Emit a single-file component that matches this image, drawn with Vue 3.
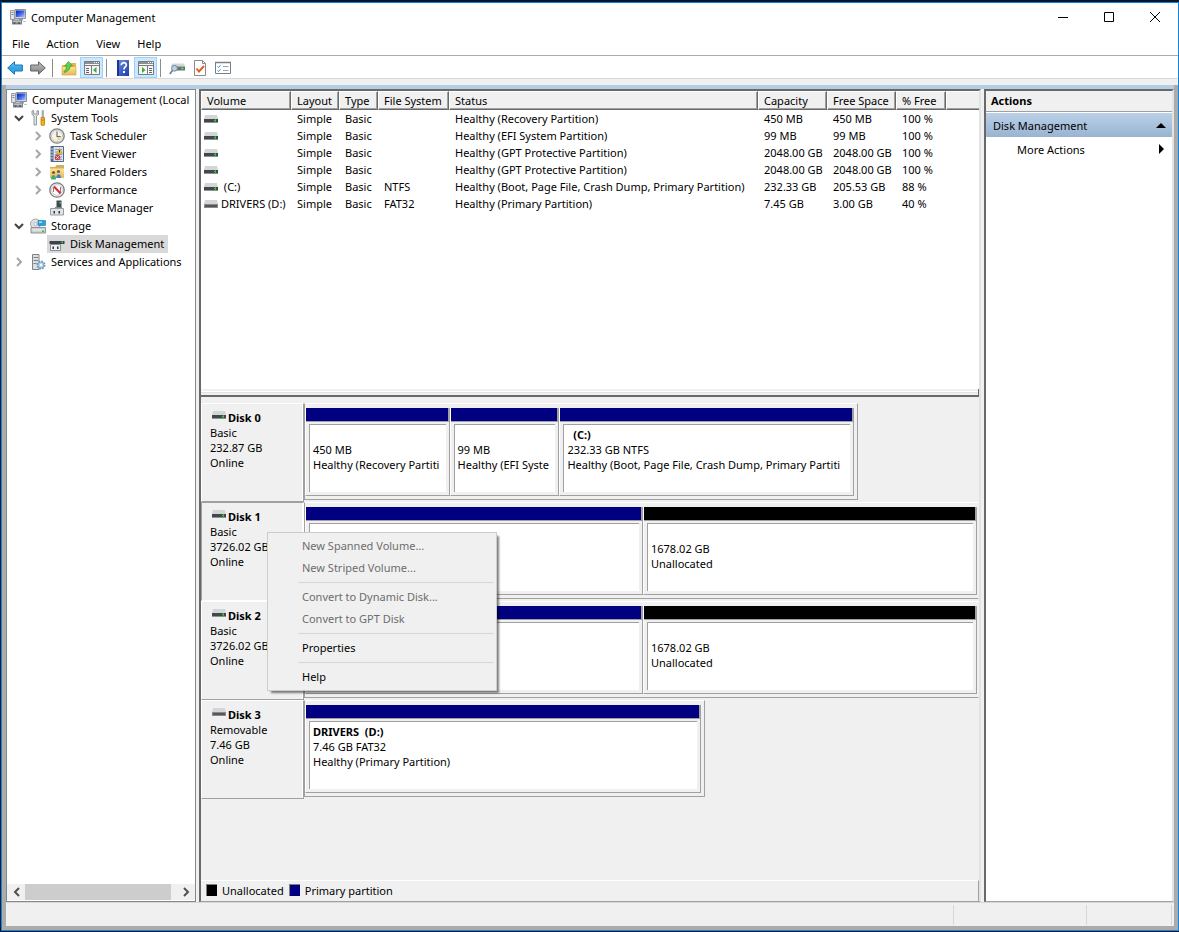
<script setup>
import { ref } from 'vue'

const menus = ['File', 'Action', 'View', 'Help']

const tools = [
  { icon: 'back', label: 'Back' },
  { icon: 'forward', label: 'Forward' },
  { sep: true },
  { icon: 'up-folder', label: 'Up one level' },
  { icon: 'pane-left', label: 'Show or hide console tree', on: true },
  { sep: true },
  { icon: 'help', label: 'Help' },
  { icon: 'pane-right', label: 'Show or hide action pane', on: true },
  { sep: true },
  { icon: 'drive-scan', label: 'Rescan disks' },
  { icon: 'page-check', label: 'Properties' },
  { icon: 'checklist', label: 'Settings' }
]

const tree = [
  { text: 'Computer Management (Local', icon: 'computer', level: 'root' },
  { text: 'System Tools', icon: 'tools', level: 'one', state: 'open' },
  { text: 'Task Scheduler', icon: 'clock', level: 'two', state: 'closed' },
  { text: 'Event Viewer', icon: 'event', level: 'two', state: 'closed' },
  { text: 'Shared Folders', icon: 'shared', level: 'two', state: 'closed' },
  { text: 'Performance', icon: 'perf', level: 'two', state: 'closed' },
  { text: 'Device Manager', icon: 'device', level: 'two' },
  { text: 'Storage', icon: 'storage', level: 'one', state: 'open' },
  { text: 'Disk Management', icon: 'disk-mgmt', level: 'two', selected: true },
  { text: 'Services and Applications', icon: 'services', level: 'one', state: 'closed' }
]

const columns = [
  { key: 'volume', label: 'Volume' },
  { key: 'layout', label: 'Layout' },
  { key: 'type', label: 'Type' },
  { key: 'fs', label: 'File System' },
  { key: 'status', label: 'Status' },
  { key: 'capacity', label: 'Capacity' },
  { key: 'free', label: 'Free Space' },
  { key: 'pct', label: '% Free' }
]

const volumes = [
  ['', 'Simple', 'Basic', '', 'Healthy (Recovery Partition)', '450 MB', '450 MB', '100 %'],
  ['', 'Simple', 'Basic', '', 'Healthy (EFI System Partition)', '99 MB', '99 MB', '100 %'],
  ['', 'Simple', 'Basic', '', 'Healthy (GPT Protective Partition)', '2048.00 GB', '2048.00 GB', '100 %'],
  ['', 'Simple', 'Basic', '', 'Healthy (GPT Protective Partition)', '2048.00 GB', '2048.00 GB', '100 %'],
  [' (C:)', 'Simple', 'Basic', 'NTFS', 'Healthy (Boot, Page File, Crash Dump, Primary Partition)', '232.33 GB', '205.53 GB', '88 %'],
  ['DRIVERS (D:)', 'Simple', 'Basic', 'FAT32', 'Healthy (Primary Partition)', '7.45 GB', '3.00 GB', '40 %']
]

const disks = [
  {
    name: 'Disk 0', kind: 'Basic', size: '232.87 GB', state: 'Online', icon: 'drive', span: 82,
    parts: [
      { grow: 144, kind: 'primary', title: '', size: '450 MB', status: 'Healthy (Recovery Partiti' },
      { grow: 109, kind: 'primary', title: '', size: '99 MB', status: 'Healthy (EFI Syste' },
      { grow: 295, kind: 'primary', title: '  (C:)', size: '232.33 GB NTFS', status: 'Healthy (Boot, Page File, Crash Dump, Primary Partiti' }
    ]
  },
  {
    name: 'Disk 1', kind: 'Basic', size: '3726.02 GB', state: 'Online', icon: 'drive', span: 100, active: true,
    parts: [
      { grow: 338, kind: 'primary', title: '', size: '', status: '' },
      { grow: 334, kind: 'free', title: '', size: '1678.02 GB', status: 'Unallocated' }
    ]
  },
  {
    name: 'Disk 2', kind: 'Basic', size: '3726.02 GB', state: 'Online', icon: 'drive', span: 100,
    parts: [
      { grow: 338, kind: 'primary', title: '', size: '', status: '' },
      { grow: 334, kind: 'free', title: '', size: '1678.02 GB', status: 'Unallocated' }
    ]
  },
  {
    name: 'Disk 3', kind: 'Removable', size: '7.46 GB', state: 'Online', icon: 'drive-off', span: 59.4,
    parts: [
      { grow: 396, kind: 'primary', title: 'DRIVERS  (D:)', size: '7.46 GB FAT32', status: 'Healthy (Primary Partition)' }
    ]
  }
]

const contextItems = [
  { text: 'New Spanned Volume...', disabled: true },
  { text: 'New Striped Volume...', disabled: true },
  { sep: true },
  { text: 'Convert to Dynamic Disk...', disabled: true },
  { text: 'Convert to GPT Disk', disabled: true },
  { sep: true },
  { text: 'Properties' },
  { sep: true },
  { text: 'Help' }
]

const menuOpen = ref(true)
</script>

<template>
  <div class="desktop">
    <svg class="defs" aria-hidden="true">
      <defs>
        <linearGradient id="gBlue" x1="0" y1="0" x2="0" y2="1"><stop offset="0" stop-color="#7fd0f7" /><stop offset=".5" stop-color="#2ea3e6" /><stop offset="1" stop-color="#3fb4ee" /></linearGradient>
        <linearGradient id="gGrey" x1="0" y1="0" x2="0" y2="1"><stop offset="0" stop-color="#c4c4c4" /><stop offset="1" stop-color="#7c7c7c" /></linearGradient>
        <linearGradient id="gFold" x1="0" y1="0" x2="0" y2="1"><stop offset="0" stop-color="#fbe59c" /><stop offset="1" stop-color="#e6b958" /></linearGradient>
        <linearGradient id="gScreen" x1="0" y1="0" x2="1" y2="1"><stop offset="0" stop-color="#0a1fb0" /><stop offset=".5" stop-color="#3a62e8" /><stop offset="1" stop-color="#a9c8ff" /></linearGradient>
        <linearGradient id="gHelp" x1="0" y1="0" x2="1" y2="1"><stop offset="0" stop-color="#6f8fe0" /><stop offset="1" stop-color="#1b3ba6" /></linearGradient>
      </defs>
      <symbol id="back" viewBox="0 0 16 16"><path d="M.7 8 7.5 1.800V5h7.800v6H7.500v3.200z" fill="url(#gBlue)" stroke="#1c6fae" /></symbol>
      <symbol id="forward" viewBox="0 0 16 16"><path d="M15.300 8 8.500 1.800V5H.7v6h7.800v3.200z" fill="url(#gGrey)" stroke="#626262" /></symbol>
      <symbol id="up-folder" viewBox="0 0 16 16"><path d="M1 5h8l1-2h5v11.500H1z" fill="#e2b64e" /><path d="M1 6.500h14V15H1z" fill="url(#gFold)" stroke="#d0a040" stroke-width=".6" /><path d="M3 11.500C4.500 10.500 5.500 9 5.500 6H3.500L7.500 1.500 11.500 6H9.300C9 9 7 11.500 3.500 12.500z" fill="#5fce48" stroke="#2c9420" stroke-width=".6" /></symbol>
      <symbol id="pane-left" viewBox="0 0 16 16"><path d="M.5 1.500h15v13H.5z" fill="#f6f6f6" stroke="#7b7b7b" /><path d="M1 2h14v2H1z" fill="#8a8f96" /><path d="M10 2.500h1M12 2.500h1M14 2.500h1" stroke="#fff" /><path d="M1 5.500h14M7.500 6v8.500" stroke="#7b7b7b" /><path d="M2 8.500h3M2 10.500h3M2 12.500h3" stroke="#5d6670" /><path d="M12.500 7v6L9 10z" fill="#35b135" /></symbol>
      <symbol id="pane-right" viewBox="0 0 16 16"><path d="M.5 1.500h15v13H.5z" fill="#f6f6f6" stroke="#7b7b7b" /><path d="M1 2h14v2H1z" fill="#8a8f96" /><path d="M10 2.500h1M12 2.500h1M14 2.500h1" stroke="#fff" /><path d="M1 5.500h14M9.500 6v8.500" stroke="#7b7b7b" /><path d="M11 8.500h3M11 10.500h3M11 12.500h3" stroke="#5d6670" /><path d="M4 7v6l3.500-3z" fill="#35b135" /></symbol>
      <symbol id="help" viewBox="0 0 16 16"><path d="M2 0h12v16H2z" fill="url(#gHelp)" /><path d="M2 0h2v16H2z" fill="#1c3590" /><path d="M6.300 5.200C6.300 1.800 11.500 2 11.300 5c-.1 1.800-2.300 2-2.300 4.500" fill="none" stroke="#fff" stroke-width="1.700" /><path d="M8 11h2v2H8z" fill="#fff" /></symbol>
      <symbol id="drive-scan" viewBox="0 0 16 16"><path d="M3 3.500h12l1 3H2z" fill="#d4d7da" /><path d="M3 6.500h13v4H3z" fill="#6a7075" /><path d="M12 7.500h2.500V9.500H12z" fill="#36e04a" /><circle cx="5.500" cy="8.300" r="2.900" fill="#b5d4ea" stroke="#6f8798" /><path d="M3.400 10.500.8 14" stroke="#6a7e8c" stroke-width="1.600" /></symbol>
      <symbol id="page-check" viewBox="0 0 16 16"><path d="M2.500.5h8l3 3v12h-11z" fill="#fff" stroke="#8a8a8a" /><path d="M10.500.5v3h3" fill="none" stroke="#8a8a8a" /><path d="m4.500 8.500 2.500 3 5-5.500" fill="none" stroke="#e5581e" stroke-width="1.900" /></symbol>
      <symbol id="checklist" viewBox="0 0 16 16"><path d="M.5 2.500h15v11H.5z" fill="#fff" stroke="#75808a" /><path d="M0 2.500h16" stroke="#75808a" stroke-width="1.500" /><path d="m2.500 6.500 1 1 2-2.200M2.500 10.500l1 1 2-2.200" fill="none" stroke="#2d8bd8" /><path d="M8 6.500h5.500M8 10.500h5.500" stroke="#9aa3ab" /></symbol>
      <symbol id="computer" viewBox="0 0 16 16"><path d="M5 .5h10.500v9H5z" fill="#cdd2d8" stroke="#8d949c" /><path d="M6 1.500h8.500V8H6z" fill="url(#gScreen)" /><path d="M.5 1.500h4v9h-4z" fill="#dfe2e6" stroke="#979da4" /><path d="M1.500 3.500h2M1.500 5.500h2" stroke="#808890" /><path d="M9 10h4v1.500H9z" fill="#9da3aa" /><path d="M2 10.500h10v5H2z" fill="#7d848c" /><path d="M3 11.500h8v2H3z" fill="#b9bec4" /><path d="M3.500 14h2M8 14h2" stroke="#333" /><path d="M13 12h3v1h-3z" fill="#c2c6ca" /></symbol>
      <symbol id="tools" viewBox="0 0 16 16"><path d="M3 1v3.500l2 1.500v9h2.500V6L9.500 4.500V1L8 .5V4H4.700V.5z" fill="#e2e5e8" stroke="#7c838a" stroke-width=".8" transform="translate(-1 0)" /><path d="M12 .5h1.500v7H12z" fill="#b6bcc2" stroke="#82898f" stroke-width=".5" /><path d="M11 7.500h3.500v7.500q-1.700 1-3.500 0z" fill="#f3b21c" stroke="#c07f0a" stroke-width=".8" /><path d="M11 10h3.500" stroke="#c07f0a" /></symbol>
      <symbol id="clock" viewBox="0 0 16 16"><circle cx="8" cy="8" r="7.200" fill="#e6e8ea" stroke="#808488" stroke-width="1.300" /><circle cx="8" cy="8" r="5.600" fill="#fcf3df" stroke="#b9bdc1" stroke-width=".7" /><path d="M8 8h4.500a4.500 4.500 0 0 1-4.500 4.500z" fill="#f2d69a" /><path d="M8 3.500V8.500h3.500" fill="none" stroke="#4a6890" stroke-width="1.100" /></symbol>
      <symbol id="event" viewBox="0 0 16 16"><path d="M2 .5h12.500v15H2z" fill="#d3e1f1" stroke="#56687e" /><path d="M2 .5h2.500v15H2z" fill="#506c92" /><path d="M1 3h3M1 6h3M1 9h3M1 12h3" stroke="#c8d2de" /><path d="M6 3.500h7M6 6h7M6 8.500h7M6 11h7M6 13.500h7" stroke="#7fa2cc" /><path d="m10.500 2.500 3 5h-6z" fill="#f5c518" stroke="#c08e00" stroke-width=".5" /><path d="M10.500 4v2.500" stroke="#333" /><circle cx="8.500" cy="11.500" r="2.700" fill="#d23b3b" /><path d="m7.300 10.300 2.400 2.400m0-2.400-2.400 2.400" stroke="#fff" stroke-width=".8" /></symbol>
      <symbol id="shared" viewBox="0 0 16 16"><path d="M1 3h5l1.500-2H15v13H1z" fill="#dcae48" /><path d="M1 4.500h14V14H1z" fill="url(#gFold)" /><path d="M10 3h4" stroke="#7fc0e8" /><circle cx="4.500" cy="8.500" r="1.600" fill="#7a5a40" /><circle cx="9.500" cy="7.500" r="1.600" fill="#7a5a40" /><path d="M2 15.500c0-6 5-6 5 0z" fill="#3fae6c" /><path d="M7.300 14c0-5 4.700-5 4.700 0z" fill="#3d7fc4" /></symbol>
      <symbol id="perf" viewBox="0 0 16 16"><circle cx="8" cy="8" r="7.200" fill="#f2f2f2" stroke="#7a7e82" stroke-width="1.300" /><circle cx="8" cy="8" r="5.300" fill="#fff" stroke="#b4b8bc" stroke-width=".7" /><path d="M4.500 10V5.500M11.500 5v5" fill="none" stroke="#c66" /><path d="m5 4.500 6.500 7" fill="none" stroke="#d22d2d" stroke-width="2" /></symbol>
      <symbol id="device" viewBox="0 0 16 16"><path d="M7.500.5h5v8h-5z" fill="#44494e" /><path d="M10.500 2h1.500v1.500h-1.500z" fill="#3ee04e" /><path d="M6 7h7v2H6z" fill="#7d8388" /><path d="M1.500 8.500h13v6.500h-13z" fill="#e1e3e5" stroke="#989da2" /><path d="M4.500 11h1.500v2.500H4.500zM9.500 11H11v2.500H9.500z" fill="#333" /></symbol>
      <symbol id="storage" viewBox="0 0 16 16"><circle cx="5.500" cy="6" r="5" fill="#dde1e4" stroke="#8e959b" stroke-width=".8" /><circle cx="5.500" cy="6" r="1.500" fill="#fff" stroke="#8e959b" stroke-width=".6" /><path d="M8 2.500h7.500v5H8z" fill="#2a9fdc" stroke="#1d78ac" stroke-width=".6" /><path d="M9 3.500h3v1.500H9z" fill="#a5def8" /><path d="M1 9.500h14.500v5.500H1z" fill="#cfd3d6" stroke="#84898e" stroke-width=".9" /><path d="M2.500 12h12" stroke="#eef0f1" /><path d="M12 12.500h2V14h-2z" fill="#2fc445" /></symbol>
      <symbol id="disk-mgmt" viewBox="0 0 16 16"><path d="M1.500 3h12.500l1.500 2.500H.5z" fill="#d4d7da" /><path d="M.5 5h15v3H.5z" fill="#3f4347" /><path d="M12.500 5.500H14V7h-1.500z" fill="#3ee04e" /><path d="M1.500 8.500h10v6H1.500z" fill="#f0f1f2" stroke="#888d92" /><path d="M3.500 10.500H5v2.500H3.500zM8 10.500h1.500v2.500H8z" fill="#333" /></symbol>
      <symbol id="services" viewBox="0 0 16 16"><path d="M2.500.5h6.500v15H2.500z" fill="#dcdfe2" stroke="#7d848a" /><path d="M3.500 3.500h4.500M3.500 6.500h4.500M3.500 9.500h3" stroke="#7d848a" /><circle cx="11" cy="11" r="3.500" fill="#cfe2f0" stroke="#6d97b8" stroke-width="2" stroke-dasharray="1.700 1" /><circle cx="11" cy="11" r="3" fill="#b5d0e5" stroke="#7aa2c0" stroke-width=".7" /><circle cx="11" cy="11" r="1.200" fill="#fff" /></symbol>
      <symbol id="drive" viewBox="0 0 14 8"><path d="M1 0h12l1 4H0z" fill="#d3d5d9" /><path d="M0 4h14v3H0z" fill="#44474a" /><path d="M0 7h14v1H0z" fill="#8f9295" /><path d="M10 5h2v1h-2z" fill="#2ff02f" /><path d="M11 4h1v3h-1z" fill="#24c424" /></symbol>
      <symbol id="drive-off" viewBox="0 0 14 8"><path d="M1 0h12l1 4H0z" fill="#d3d5d9" /><path d="M0 4h14v4H0z" fill="#8a8a8c" /><path d="M1 5h12v2H1z" fill="#555558" /></symbol>
    </svg>

    <div class="window">
      <header class="titlebar">
        <svg class="ico"><use href="#computer" /></svg>
        <h1>Computer Management</h1>
        <div class="winbtns">
          <button type="button" aria-label="Minimize"><svg viewBox="0 0 12 12"><path d="M1 6.500h10" stroke="#000" /></svg></button>
          <button type="button" aria-label="Maximize"><svg viewBox="0 0 12 12"><path d="M1.500 1.500h9v9h-9z" fill="none" stroke="#000" /></svg></button>
          <button type="button" aria-label="Close"><svg viewBox="0 0 12 12"><path d="m1 1 10 10M11 1 1 11" stroke="#000" /></svg></button>
        </div>
      </header>

      <nav class="menubar">
        <button v-for="m in menus" :key="m" type="button">{{ m }}</button>
      </nav>

      <div class="toolbar" role="toolbar">
        <template v-for="(t, i) in tools" :key="i">
          <span v-if="t.sep" class="toolsep"></span>
          <button v-else type="button" :class="{ on: t.on }" :aria-label="t.label">
            <svg class="ico"><use :href="'#' + t.icon" /></svg>
          </button>
        </template>
      </div>

      <div class="frame">
        <main class="panes">
          <aside class="treepane">
            <ul class="tree">
              <li v-for="n in tree" :key="n.text" :class="n.level">
                <button v-if="n.state" type="button" class="twisty" :class="n.state" :aria-label="'Toggle ' + n.text">
                  <svg viewBox="0 0 10 10"><path v-if="n.state === 'open'" d="m1 3 4 4 4-4" /><path v-else d="m3 1 4 4-4 4" /></svg>
                </button>
                <span v-else-if="n.level !== 'root'" class="twisty"></span>
                <button type="button" class="node" :class="{ selected: n.selected }">
                  <svg class="ico"><use :href="'#' + n.icon" /></svg><span>{{ n.text }}</span>
                </button>
              </li>
            </ul>
            <div class="hscroll">
              <button type="button" aria-label="Scroll left"><svg viewBox="0 0 10 10"><path d="M7 1 3 5l4 4" /></svg></button>
              <div class="track"><div class="thumb"></div></div>
              <button type="button" aria-label="Scroll right"><svg viewBox="0 0 10 10"><path d="m3 1 4 4-4 4" /></svg></button>
            </div>
          </aside>

          <section class="center">
            <div class="volumes">
              <table>
                <colgroup>
                  <col v-for="c in columns" :key="c.key" :class="'c-' + c.key" />
                  <col />
                </colgroup>
                <thead>
                  <tr>
                    <th v-for="c in columns" :key="c.key" scope="col">{{ c.label }}</th>
                    <td class="filler"></td>
                  </tr>
                </thead>
                <tbody>
                  <tr v-for="(v, i) in volumes" :key="i">
                    <td v-for="(cell, j) in v" :key="j">
                      <span v-if="j === 0" class="vol"><svg class="drive"><use :href="i === 5 ? '#drive-off' : '#drive'" /></svg>{{ cell }}</span>
                      <template v-else>{{ cell }}</template>
                    </td>
                    <td></td>
                  </tr>
                </tbody>
              </table>
            </div>
            <div class="splitter"></div>
            <div class="graph">
              <div v-for="d in disks" :key="d.name" class="disk">
                <div class="label" :class="{ active: d.active }">
                  <strong><svg class="drive"><use :href="'#' + d.icon" /></svg>{{ d.name }}</strong>
                  <span>{{ d.kind }}</span>
                  <span>{{ d.size }}</span>
                  <span>{{ d.state }}</span>
                </div>
                <div class="stripe">
                  <div class="parts" :class="{ full: d.span === 100 }" :style="{ width: d.span + '%' }">
                    <div v-for="(p, i) in d.parts" :key="i" class="part" :style="{ flexGrow: p.grow }">
                      <div class="bar" :class="p.kind"></div>
                      <div class="well">
                        <strong>{{ p.title }}</strong>
                        <span>{{ p.size }}</span>
                        <span>{{ p.status }}</span>
                      </div>
                    </div>
                  </div>
                </div>
              </div>

              <div v-if="menuOpen" class="context" role="menu">
                <template v-for="(c, i) in contextItems" :key="i">
                  <hr v-if="c.sep" />
                  <button v-else type="button" role="menuitem" :disabled="c.disabled">{{ c.text }}</button>
                </template>
              </div>
            </div>
            <div class="legend">
              <i class="swatch free"></i><span>Unallocated</span>
              <i class="swatch primary"></i><span>Primary partition</span>
            </div>
          </section>

          <aside class="actions">
            <h2>Actions</h2>
            <button type="button" class="group">Disk Management<svg viewBox="0 0 10 10"><path d="M0 8h10L5 3z" /></svg></button>
            <button type="button" class="more">More Actions<svg viewBox="0 0 10 10"><path d="M3 0v10l5-5z" /></svg></button>
          </aside>
        </main>
        <footer class="status"><span></span><span></span><span></span></footer>
      </div>
    </div>
  </div>
</template>

<style>
html, body { margin: 0; background: #001a33; }
</style>

<style scoped>
.desktop {
  box-sizing: border-box;
  height: 100vh;
  padding: 2px 0 1px 1px;
  background: #001a33;
  color: #000;
  font-family: "Noto Sans", "Open Sans", sans-serif;
  font-size: 11px;
  line-height: 15px;
}
.desktop *, .desktop *::before { box-sizing: border-box; }
.defs { position: absolute; width: 0; height: 0; }
button { margin: 0; padding: 0; border: 0; background: none; font: inherit; color: inherit; text-align: left; }
h1, h2 { margin: 0; font-size: inherit; }
h1 { font-weight: 400; }
.ico { width: 16px; height: 16px; flex: none; display: block; }
.drive { width: 14px; height: 8px; flex: none; display: block; }

.window { height: 100%; display: flex; flex-direction: column; border: 1px solid #1883d7; background: #fff; }

.titlebar { display: flex; align-items: center; height: 28px; padding-left: 8px; flex: none; }
.titlebar h1 { margin-left: 5px; flex: 1; }
.winbtns { display: flex; }
.winbtns button { width: 46px; height: 28px; display: grid; place-items: center; }
.winbtns svg { width: 12px; height: 12px; }

.menubar { display: flex; align-items: center; height: 24px; padding-left: 4px; flex: none; }
.menubar button { padding: 0 6px; margin-right: 5px; }

.toolbar { display: flex; align-items: center; height: 24px; padding: 1px 0 0 1px; border-top: 1px solid #ababab; border-bottom: 1px solid #dadada; flex: none; }
.toolbar button { width: 23px; height: 21px; display: grid; place-items: center; border: 1px solid transparent; }
.toolbar button.on { background: #cce8ff; border-color: #99d1ff; }
.toolsep { width: 8px; height: 18px; padding-left: 3px; display: flex; }
.toolsep::before { content: ""; width: 1px; background: #8c8c8c; }

.frame { flex: 1; min-height: 0; margin-top: 6px; display: flex; flex-direction: column; border: solid #ababab; border-width: 0 4px 4px; background: #f0f0f0; box-shadow: 0 -6px #f0f0f0; }
.panes { flex: 1; min-height: 0; display: grid; grid-template-columns: 190px minmax(0, 1fr) 190px; gap: 3px; border-top: 4px solid #b4cde6; }

.treepane { display: flex; flex-direction: column; min-width: 0; border: 1px solid #828790; background: #fff; }
.tree { flex: 1; min-height: 0; margin: 0; padding: 1px 0 0; list-style: none; overflow: hidden; }
.tree li { display: flex; align-items: center; height: 18px; white-space: nowrap; }
.tree .root { padding-left: 4px; }
.tree .one { padding-left: 3px; }
.tree .two { padding-left: 22px; }
.twisty { width: 17px; height: 18px; margin-right: 1px; display: grid; place-items: center; flex: none; }
.twisty svg { width: 10px; height: 10px; fill: none; stroke: #a6a6a6; stroke-width: 2; }
.twisty.open svg { stroke: #404040; }
.node { display: flex; align-items: center; height: 18px; gap: 5px; padding: 0 4px 0 2px; }
.node span { height: 18px; line-height: 18px; }
.root .node { padding-left: 0; }
.selected { background: #d9d9d9; }
.hscroll { display: flex; height: 17px; padding: 0 1px; background: #f0f0f0; flex: none; border-bottom: 1px solid #fff; }
.hscroll button { width: 17px; display: grid; place-items: center; }
.hscroll svg { width: 10px; height: 10px; fill: none; stroke: #505050; stroke-width: 2; }
.track { flex: 1; display: flex; }
.thumb { width: 96%; background: #cdcdcd; }

.center, .actions { min-width: 0; border: solid; border-width: 2px 2px 1px; border-color: #696969 #e3e3e3 #a0a0a0 #696969; }
.center { display: flex; flex-direction: column; background: #f0f0f0; }
.volumes { flex: 298 1 0; min-height: 0; overflow: hidden; background: #fff; }
table { width: 100%; table-layout: fixed; border-collapse: separate; border-spacing: 0; white-space: nowrap; }
.c-volume { width: 90px; }
.c-layout { width: 48px; }
.c-type { width: 39px; }
.c-fs { width: 71px; }
.c-status { width: 309px; }
.c-capacity, .c-free { width: 69px; }
.c-pct { width: 50px; }
th, td { height: 17px; padding: 0 0 0 6px; font-weight: 400; text-align: left; overflow: visible; }
th, .filler { height: 19px; background: #f0f0f0; border: solid; border-width: 1px 1px 1px 1px; border-color: #fff #696969 #696969 #fff; box-shadow: inset -1px -1px #a0a0a0; }
th { padding-left: 5px; }
.filler { border-right: 0; box-shadow: inset 0 -1px #a0a0a0; }
td:first-child { padding-left: 3px; }
.vol { display: flex; align-items: center; gap: 3px; white-space: pre; }

.splitter { height: 8px; flex: none; border: solid; border-width: 0 1px 2px 0; border-color: #696969; background: linear-gradient(#f0f0f0 2px, #fff 2px, #fff 3px, #e3e3e3 3px, #e3e3e3 4px, #f0f0f0 4px); }
.graph { position: relative; flex: 476 1 0; min-height: 0; padding-top: 6px; }
.disk { display: flex; height: 99px; }
.label { width: 103px; flex: none; display: flex; flex-direction: column; padding: 6px 0 0 8px; border: 1px solid; border-color: #fff #a0a0a0 #a0a0a0 #fff; box-shadow: inset -1px 0 #fff; }
.label.active { border-color: #a0a0a0 #fff #fff #a0a0a0; }
.label strong { display: flex; gap: 2px; padding-left: 2px; }
.label .drive { margin-top: 1px; }
.stripe { flex: 1; min-width: 0; }
.parts { display: flex; height: 97px; padding: 4px 3px 3px 0; border: 1px solid; border-color: #fff #a0a0a0 #a0a0a0; }
.parts.full { padding-right: 1px; border-right-color: transparent; }
.part { flex-basis: 0; min-width: 0; display: flex; flex-direction: column; border: solid; border-width: 0 1px 1px; border-color: #a0a0a0 #a0a0a0 #a0a0a0 #fff; }
.bar { height: 14px; flex: none; border-right: 1px solid #a0a0a0; border-bottom: 1px solid #a0a0a0; }
.primary { background: #000080; }
.free { background: #000; }
.well { flex: 1; min-height: 0; margin: 2px 3px 3px; padding: 2px 0 0 3px; border-top: 1px solid #a0a0a0; border-left: 1px solid #a0a0a0; background: #fff; display: flex; flex-direction: column; overflow: hidden; white-space: pre; }
.well strong, .well span { height: 15px; flex: none; }

.context { position: absolute; left: 66px; top: 135px; width: 230px; padding: 2px; border: 1px solid #ccc; background: #f0f0f0; box-shadow: 3px 3px 2px -1px rgba(0, 0, 0, .5); }
.context button { display: block; width: 100%; height: 22px; padding: 0 0 2px 32px; }
.context button:disabled { color: #6d6d6d; }
.context hr { margin: 3px 0 3px 28px; border: 0; height: 1px; background: #d7d7d7; }

.legend { display: flex; align-items: center; height: 21px; padding: 0 0 2px 5px; gap: 5px; flex: none; border-top: 1px solid #fff; border-right: 1px solid #a0a0a0; }
.swatch { width: 11px; height: 12px; border: 1px solid #808080; border-width: 1px 0 0 1px; }

.actions { background: #fff; }
.actions h2 { height: 21px; padding-left: 5px; line-height: 20px; background: #f0f0f0; border-bottom: 1px solid #a0a0a0; font-weight: 700; }
.actions button { display: flex; align-items: center; justify-content: space-between; width: 100%; height: 24px; padding: 0 6px 0 7px; }
.actions .group { margin-top: 1px; background: linear-gradient(#bad0e8, #99b4d1); }
.actions .more { padding-left: 31px; }
.actions svg { width: 10px; height: 10px; }

.status { display: flex; justify-content: flex-end; height: 24px; padding: 2px 2px 1px 0; flex: none; border-top: 1px solid #d7d7d7; }
.status span { border-right: 1px solid #d7d7d7; }
.status span:nth-child(2) { width: 133px; }
.status span:nth-child(3) { width: 85px; }
</style>
